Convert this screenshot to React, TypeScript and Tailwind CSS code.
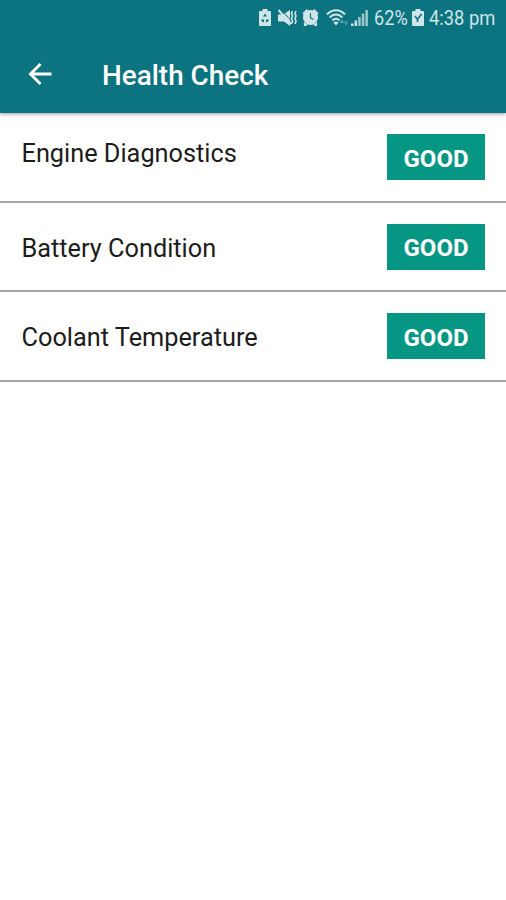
import type { ReactNode } from "react";

const checks = [
  { label: "Engine Diagnostics", status: "GOOD", raised: true },
  { label: "Battery Condition", status: "GOOD", raised: false },
  { label: "Coolant Temperature", status: "GOOD", raised: false },
];

function Icon({ className, box, children }: { className: string; box: string; children: ReactNode }) {
  return (
    <svg viewBox={box} className={`shrink-0 ${className}`} fill="currentColor" aria-hidden="true">
      {children}
    </svg>
  );
}

function StatusBar() {
  return (
    <div className="flex h-9 items-start pt-2 pl-[259px] text-[#cfe5e8]">
      <Icon className="mt-px h-[18px] w-3" box="0 0 12 18">
        <path d="M3.500 0h5v2H11a1 1 0 0 1 1 1v13a1 1 0 0 1-1 1H1a1 1 0 0 1-1-1V3a1 1 0 0 1 1-1h2.500z" />
        <path d="M6 4.500 8 7.500H4zM2 10.500h3V13H3.500zM10 10.500H7V13h1.500z" fill="#0b7480" />
      </Icon>
      <Icon className="ml-[7px] mt-px h-[18px] w-[19px]" box="0 0 19 18">
        <path d="M0 5.500h5L12 1v16l-6-4.500H0z" />
        <path d="M2.500 0 13.500 12" stroke="#0b7480" strokeWidth="1" />
        <path d="M.5 1 13 15" stroke="currentColor" strokeWidth="2" />
        <path
          d="M14.500 2l-1 2.500 1 2.500-1 2.500 1 2.500-1 3M18 2l-1 2.500L18 7l-1 2.500 1 2.500-1 3"
          fill="none"
          stroke="currentColor"
          strokeWidth="1.600"
        />
      </Icon>
      <Icon className="ml-[5px] mt-px h-[17px] w-[17px]" box="0 0 17 18">
        <path d="M0 4.500 4.500 0 6 1.500 1.500 6zM17 4.500 12.500 0 11 1.500 15.500 6zM1.500 18v-4l4 2.500L4 18zM15.500 18v-4l-4 2.500L13 18z" />
        <circle cx="8.500" cy="9" r="8" />
        <path d="M8.500 4.500v5l3 1.500" fill="none" stroke="#0b7480" strokeWidth="1.300" />
      </Icon>
      <Icon className="ml-[7px] mt-px h-[18px] w-[23px]" box="0 0 23 18">
        <path
          d="M1 5.500C6-.200 14-.200 19 5.500M3.700 8.500c3.500-4 9.100-4 12.600 0M6.500 11.500c2-2.200 5-2.200 7 0"
          fill="none"
          stroke="currentColor"
          strokeWidth="2"
        />
        <path d="M7.500 13.500c1.500-1.400 3.500-1.400 5 0L10 16.500z" />
        <path d="m14 14 2-4 2 4zM18 12.500h4l-2 4z" opacity=".4" />
      </Icon>
      <Icon className="ml-[2px] mt-px h-[18px] w-[17px]" box="0 0 17 18">
        <path d="M0 14.500h2.500V17H0zM3.600 11.500h2.500V17H3.600z" />
        <path d="M7.200 8h2.500v9H7.200zM10.800 4.500h2.500V17h-2.500zM14.400 1h2.500v16h-2.500z" opacity=".75" />
      </Icon>
      <span className="ml-[6px] mt-px w-[34px] origin-left scale-x-[0.93] whitespace-nowrap text-[19.500px] leading-5">62%</span>
      <Icon className="ml-[4px] mt-px h-[18px] w-3" box="0 0 12 18">
        <path d="M3.500 0h5v2H11a1 1 0 0 1 1 1v13a1 1 0 0 1-1 1H1a1 1 0 0 1-1-1V3a1 1 0 0 1 1-1h2.500z" />
        <path d="m3 7 2.500 3.500L9.500 5M5.500 10.500V13" fill="none" stroke="#0b7480" strokeWidth="1.600" />
      </Icon>
      <span className="ml-[5px] mt-px w-[66px] origin-left scale-x-[0.94] whitespace-nowrap text-[19.500px] leading-5">4:38 pm</span>
    </div>
  );
}

export default function App() {
  return (
    <div className="h-[900px] w-[506px] overflow-hidden bg-white font-['Roboto',sans-serif]">
      <header className="relative h-[113px] bg-[#0b7480] shadow-[0_1px_4px_rgba(0,0,0,0.4)]">
        <StatusBar />
        <div className="flex h-[76px] items-center pl-7 text-white">
          <Icon className="h-6 w-6" box="0 0 24 24">
            <path
              d="M23.500 12H2.500M12.500 2 2.500 12l10 10"
              fill="none"
              stroke="currentColor"
              strokeWidth="2.900"
            />
          </Icon>
          <h1 className="ml-[50px] whitespace-nowrap pt-[3px] text-[27.900px] font-medium leading-8">Health Check</h1>
        </div>
      </header>
      <ul>
        {checks.map((check) => (
          <li
            key={check.label}
            className="flex h-[89.500px] items-center justify-between border-b-2 border-[#a5a5a5] pl-[21.500px] pr-[21px] pt-px"
          >
            <span
              className={`whitespace-nowrap text-[25.300px] leading-8 text-[#1c1c1c] ${check.raised ? "pb-1.5" : "pt-1"}`}
            >
              {check.label}
            </span>
            <span className="flex h-[46px] w-[98px] items-center justify-center bg-[#069684] pt-[3px] text-[24px] font-bold leading-none text-white">
              {check.status}
            </span>
          </li>
        ))}
      </ul>
    </div>
  );
}
